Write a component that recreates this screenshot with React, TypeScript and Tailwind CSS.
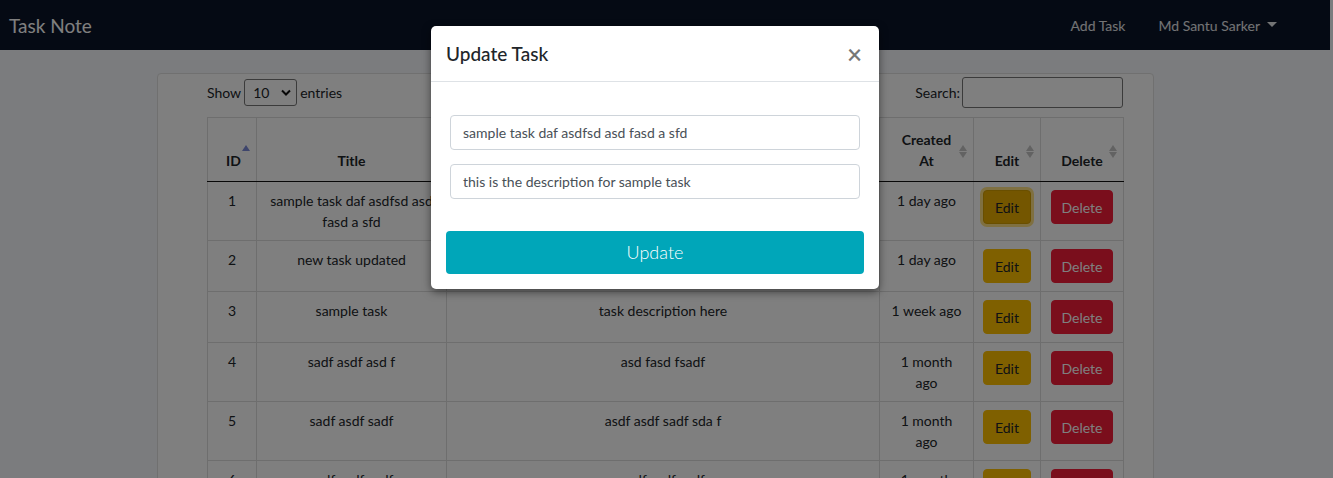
import React from "react";

type Task = {
  id: number;
  title: string;
  description: string;
  createdAt: string;
};

const tasks: Task[] = [
  { id: 1, title: "sample task daf asdfsd asd fasd a sfd", description: "this is the description for sample task", createdAt: "1 day ago" },
  { id: 2, title: "new task updated", description: "new description updated", createdAt: "1 day ago" },
  { id: 3, title: "sample task", description: "task description here", createdAt: "1 week ago" },
  { id: 4, title: "sadf asdf asd f", description: "asd fasd fsadf", createdAt: "1 month ago" },
  { id: 5, title: "sadf asdf sadf", description: "asdf asdf sadf sda f", createdAt: "1 month ago" },
  { id: 6, title: "sadf asdf sadf", description: "asdf sadf sadf", createdAt: "1 month ago" },
];

const SortIcon: React.FC<{ active?: boolean }> = ({ active }) => (
  <span className="absolute right-[6px] top-[27px] flex flex-col gap-[1px]">
    <svg width="8" height="6" viewBox="0 0 8 6">
      <path d="M4 0 L8 6 L0 6 Z" fill={active ? "#7c8bd8" : "#c4c4c4"} />
    </svg>
    <svg width="8" height="6" viewBox="0 0 8 6">
      <path d="M0 0 L8 0 L4 6 Z" fill={active ? "transparent" : "#c4c4c4"} />
    </svg>
  </span>
);

const Th: React.FC<{ children: React.ReactNode; active?: boolean }> = ({ children, active }) => (
  <th className="relative border border-[#dcdcdc] border-b-[#111] px-[18px] pt-[11px] pb-[10px] align-bottom text-center font-bold">
    {children}
    <SortIcon active={active} />
  </th>
);

const cell = "border border-[#dcdcdc] px-[8px] py-[8px] align-top text-center";

export default function App() {
  return (
    <div
      className="relative h-[478px] overflow-hidden bg-[#f6f8fc] text-[14px] leading-[21px] text-[#212529]"
      style={{ fontFamily: 'Lato, "Open Sans", sans-serif' }}
    >
      <nav className="flex h-[50px] w-[1330px] items-center justify-between bg-[#0a1428] pl-[9px] pr-[53px]">
        <span className="text-[19px] text-white">Task Note</span>
        <div className="flex items-center gap-[33px] text-[14px] text-white/90">
          <span>Add Task</span>
          <span className="flex items-center gap-[7px]">
            Md Santu Sarker
            <svg width="10" height="6" viewBox="0 0 10 6">
              <path d="M0 0 L10 0 L5 5 Z" fill="currentColor" />
            </svg>
          </span>
        </div>
      </nav>

      <main className="pl-[157px] pt-[23px]">
        <div className="w-[997px] rounded-[4px] border border-[#e0e0e0] bg-white pl-[49px] pr-[30px] pt-[3px]">
          <div className="flex items-center justify-between">
            <div className="flex items-center gap-[3px]">
              <span>Show</span>
              <span className="flex h-[27px] w-[53px] items-center justify-between rounded-[3px] border border-[#777] pl-[8px] pr-[5px]">
                10
                <svg width="10" height="7" viewBox="0 0 10 7">
                  <path d="M1 1.5 L5 5.5 L9 1.5" fill="none" stroke="#111" strokeWidth="2" />
                </svg>
              </span>
              <span>entries</span>
            </div>
            <div className="flex items-center gap-[2px]">
              <span>Search:</span>
              <span className="h-[31px] w-[161px] rounded-[3px] border border-[#777] bg-white" />
            </div>
          </div>

          <table className="mt-[9px] w-[916px] table-fixed border-collapse">
            <colgroup>
              <col className="w-[49px]" />
              <col className="w-[190px]" />
              <col className="w-[433px]" />
              <col className="w-[94px]" />
              <col className="w-[67px]" />
              <col className="w-[83px]" />
            </colgroup>
            <thead>
              <tr>
                <Th active>ID</Th>
                <Th>Title</Th>
                <Th>Description</Th>
                <Th>Created At</Th>
                <Th>Edit</Th>
                <Th>Delete</Th>
              </tr>
            </thead>
            <tbody>
              {tasks.map((t) => (
                <tr key={t.id}>
                  <td className={cell}>{t.id}</td>
                  <td className={cell}>{t.title}</td>
                  <td className={cell}>{t.description}</td>
                  <td className={cell}>{t.createdAt}</td>
                  <td className={cell}>
                    <button
                      className={`h-[34px] rounded-[4px] border px-[11px] text-[#212529] ${
                        t.id === 1
                          ? "border-[#d39e00] bg-[#e9ac00] shadow-[0_0_0_3px_rgba(255,193,7,0.5)]"
                          : "border-[#ffc000] bg-[#ffc000]"
                      }`}
                    >
                      Edit
                    </button>
                  </td>
                  <td className={cell}>
                    <button className="h-[34px] rounded-[4px] border border-[#f41c38] bg-[#f41c38] px-[10px] text-white">
                      Delete
                    </button>
                  </td>
                </tr>
              ))}
            </tbody>
          </table>
        </div>
      </main>

      {/* modal backdrop */}
      <div className="absolute inset-0 bg-black/50">
        <div className="ml-[431px] mt-[26px] w-[448px] rounded-[5px] bg-white shadow-[0_3px_9px_rgba(0,0,0,0.5)]">
          <div className="flex h-[56px] items-center justify-between border-b border-[#dee2e6] px-[15px]">
            <h5 className="text-[19px] font-medium text-[#212529]">Update Task</h5>
            <span className="pr-[2px] text-[26px] font-semibold leading-none text-[#777]">×</span>
          </div>
          <div className="px-[15px] pb-[15px] pt-[33px]">
            <div className="px-[4px]">
              <div className="flex h-[35px] items-center rounded-[4px] border border-[#ced4da] px-[12px] text-[#495057]">
                sample task daf asdfsd asd fasd a sfd
              </div>
              <div className="mt-[14px] flex h-[35px] items-center rounded-[4px] border border-[#ced4da] px-[12px] text-[#495057]">
                this is the description for sample task
              </div>
            </div>
            <button className="mt-[32px] h-[43px] w-full rounded-[4px] bg-[#00a6b9] text-[18px] font-light text-white">
              Update
            </button>
          </div>
        </div>
      </div>
    </div>
  );
}
